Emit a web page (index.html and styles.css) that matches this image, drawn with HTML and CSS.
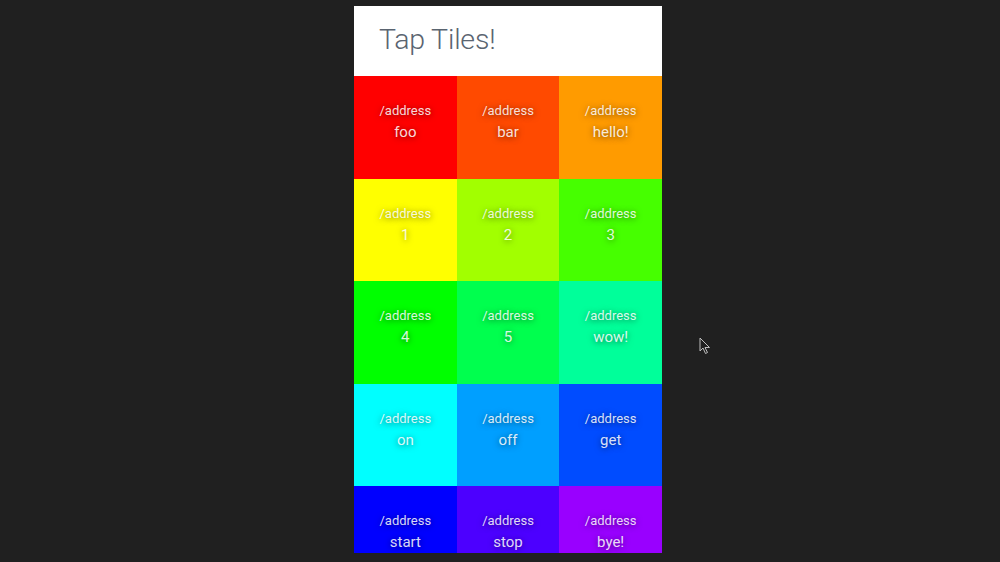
FILE: index.html
```html
<!DOCTYPE html>
<html>
<head>
<meta charset="utf-8">
<link rel="stylesheet" href="styles.css">
</head>
<body>
<div class="stage">
  <div class="phone">
    <header class="header"><h1 class="title">Tap Tiles!</h1></header>
    <div class="grid">
      <div class="tile t1"><span class="addr">/address</span><span class="val">foo</span></div>
      <div class="tile t2"><span class="addr">/address</span><span class="val">bar</span></div>
      <div class="tile t3"><span class="addr">/address</span><span class="val">hello!</span></div>
      <div class="tile t4"><span class="addr">/address</span><span class="val">1</span></div>
      <div class="tile t5"><span class="addr">/address</span><span class="val">2</span></div>
      <div class="tile t6"><span class="addr">/address</span><span class="val">3</span></div>
      <div class="tile t7"><span class="addr">/address</span><span class="val">4</span></div>
      <div class="tile t8"><span class="addr">/address</span><span class="val">5</span></div>
      <div class="tile t9"><span class="addr">/address</span><span class="val">wow!</span></div>
      <div class="tile t10"><span class="addr">/address</span><span class="val">on</span></div>
      <div class="tile t11"><span class="addr">/address</span><span class="val">off</span></div>
      <div class="tile t12"><span class="addr">/address</span><span class="val">get</span></div>
      <div class="tile t13"><span class="addr">/address</span><span class="val">start</span></div>
      <div class="tile t14"><span class="addr">/address</span><span class="val">stop</span></div>
      <div class="tile t15"><span class="addr">/address</span><span class="val">bye!</span></div>
    </div>
  </div>
  <svg class="cursor" width="12" height="18" viewBox="0 0 12 18"><path d="M1 1 L1 14 L4 11 L6.5 16.5 L8.5 15.5 L6 10.5 L10.5 10.5 Z" fill="#1e1e1e" stroke="#bdbdbd" stroke-width="1"/></svg>
</div>
</body>
</html>
```
FILE: styles.css
```css
html, body {
  margin: 0;
  padding: 0;
  background: #202020;
}
body {
  font-family: Roboto, "Noto Sans", sans-serif;
}
.stage {
  position: relative;
  width: 1000px;
  height: 562px;
  overflow: hidden;
  display: flex;
  justify-content: center;
  padding-top: 6px;
  box-sizing: border-box;
}
.phone {
  width: 308px;
  height: 547px;
  margin-left: 16px;
  overflow: hidden;
  display: flex;
  flex-direction: column;
  background: #fff;
}
.header {
  height: 70px;
  flex: none;
  background: #fff;
  display: flex;
  align-items: center;
  padding-left: 25px;
}
.title {
  margin: 0;
  font-weight: 300;
  font-size: 28.5px;
  color: #5a6470;
  letter-spacing: -0.2px;
  position: relative;
  top: -2px;
}
.grid {
  display: grid;
  grid-template-columns: repeat(3, 1fr);
  grid-auto-rows: 102.6px;
}
.tile {
  display: flex;
  flex-direction: column;
  align-items: center;
  padding-top: 25px;
  box-sizing: border-box;
  color: rgba(255, 255, 255, 0.86);
  text-shadow: 0 1px 6px rgba(0, 0, 0, 0.55);
}
.addr {
  font-size: 13px;
  line-height: 20px;
}
.val {
  font-size: 15px;
  line-height: 22px;
}
.t1 { background: #ff0000; }
.t2 { background: #ff4a00; }
.t3 { background: #ff9b00; }
.t4 { background: #ffff00; }
.t5 { background: #a2ff00; }
.t6 { background: #46ff00; }
.t7 { background: #00ff00; }
.t8 { background: #00ff4e; }
.t9 { background: #00ff9a; }
.t10 { background: #00ffff; }
.t11 { background: #009fff; }
.t12 { background: #004cff; }
.t13 { background: #0000ff; }
.t14 { background: #4c00ff; }
.t15 { background: #9900ff; }
.cursor {
  position: absolute;
  left: 699px;
  top: 337px;
}
```
